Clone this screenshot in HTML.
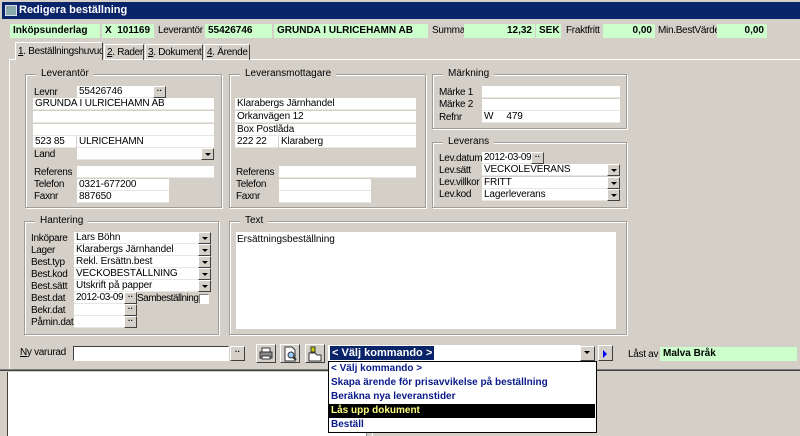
<!DOCTYPE html>
<html><head><meta charset="utf-8"><style>
*{box-sizing:border-box;margin:0;padding:0}
body{width:800px;height:436px;overflow:hidden;background:#d4d0c8;font-family:"Liberation Sans",sans-serif;font-size:10px;color:#000;position:relative}
.a{position:absolute;white-space:nowrap}
.i{position:absolute;background:#fff;height:12px;line-height:12px;padding-left:2px;overflow:hidden;white-space:nowrap;border-bottom:1px solid #e8e6e0;letter-spacing:-0.15px}
.g{position:absolute;background:#ccffcc;height:14px;line-height:14px;padding:0 3px;font-weight:bold;white-space:nowrap}
.l{position:absolute;line-height:12px;white-space:nowrap;letter-spacing:-0.3px}
.b{position:absolute;width:13px;height:12px;background:#d4d0c8;border:1px solid;border-color:#fff #404040 #404040 #fff;font-size:8px;line-height:8px;text-align:center;font-weight:bold}
.gb{position:absolute;border:1px solid #a09d96;box-shadow:1px 1px 0 #fff inset,1px 1px 0 #fff}
.lg{position:absolute;background:#d4d0c8;padding:0 5px;line-height:12px;top:-7px;left:10px;white-space:nowrap}
.dd:after{content:"";position:absolute;left:3px;top:4px;border:3px solid transparent;border-top:3px solid #000;border-bottom:0}
.tab{position:absolute;top:44px;height:16px;line-height:15px;padding:0 2px;border:1px solid;border-color:#fff #404040 transparent #fff;border-bottom:none;white-space:nowrap;overflow:hidden;letter-spacing:-0.3px}
.ib{position:absolute;top:344px;width:20px;height:19px;border:1px solid;border-color:#fff #404040 #404040 #fff;background:#d4d0c8}
.ol{position:absolute;left:329px;width:266px;height:14px;line-height:14px;padding-left:2px;font-weight:bold;color:#0a1a8a;font-size:10px}
</style></head><body>
<div class="a" style="left:2px;top:2px;width:798px;height:17px;background:#0a246a"></div>
<div class="a" style="left:5px;top:5px;width:12px;height:11px;background:#8aa;border:1px solid #dde"></div>
<div class="a" style="left:19px;top:3px;color:#fff;font-weight:bold;font-size:11px;line-height:15px">Redigera beställning</div>
<div class="g" style="left:10px;top:24px;width:90px">Inköpsunderlag</div>
<div class="g" style="left:102px;top:24px;width:52px">X &nbsp;101169</div>
<div class="l" style="left:158px;top:25px">Leverantör</div>
<div class="g" style="left:205px;top:24px;width:67px">55426746</div>
<div class="g" style="left:274px;top:24px;width:154px">GRUNDA I ULRICEHAMN AB</div>
<div class="l" style="left:432px;top:25px">Summa</div>
<div class="g" style="left:464px;top:24px;width:71px;text-align:right">12,32</div>
<div class="g" style="left:536px;top:24px;width:25px">SEK</div>
<div class="l" style="left:566px;top:25px">Fraktfritt</div>
<div class="g" style="left:603px;top:24px;width:52px;text-align:right">0,00</div>
<div class="l" style="left:658px;top:25px">Min.BestVärde</div>
<div class="g" style="left:717px;top:24px;width:50px;text-align:right">0,00</div>
<div class="a" style="left:10px;top:59px;width:790px;height:1px;background:#fff"></div>
<div class="a" style="left:9px;top:59px;width:1px;height:312px;background:#fff"></div>
<div class="a" style="left:0;top:369px;width:800px;height:1px;background:#808080"></div>
<div class="a" style="left:0;top:370px;width:800px;height:1px;background:#404040"></div>
<div class="tab" style="left:15px;top:42px;height:18px;width:88px;background:#d4d0c8;z-index:2;line-height:17px"><u>1</u>. Beställningshuvud</div>
<div class="tab" style="left:104px;width:40px"><u>2</u>. Rader</div>
<div class="tab" style="left:145px;width:58px"><u>3</u>. Dokument</div>
<div class="tab" style="left:204px;width:46px"><u>4</u>. Ärende</div>
<div class="gb" style="left:25px;top:74px;width:197px;height:134px"><span class="lg">Leverantör</span></div>
<div class="l" style="left:34px;top:87px">Levnr</div>
<div class="i" style="left:77px;top:86px;width:76px">55426746</div><div class="b" style="left:153px;top:86px">··</div>
<div class="i" style="left:33px;top:98px;width:181px">GRUNDA I ULRICEHAMN AB</div>
<div class="i" style="left:33px;top:111px;width:181px"></div>
<div class="i" style="left:33px;top:124px;width:181px"></div>
<div class="i" style="left:33px;top:136px;width:43px">523 85</div>
<div class="i" style="left:77px;top:136px;width:137px">ULRICEHAMN</div>
<div class="l" style="left:34px;top:149px">Land</div>
<div class="i" style="left:77px;top:148px;width:124px"></div><div class="b dd" style="left:201px;top:148px"></div>
<div class="l" style="left:34px;top:167px">Referens</div>
<div class="i" style="left:77px;top:166px;width:137px"></div>
<div class="l" style="left:34px;top:179px">Telefon</div>
<div class="i" style="left:77px;top:179px;width:92px">0321-677200</div>
<div class="l" style="left:34px;top:191px">Faxnr</div>
<div class="i" style="left:77px;top:191px;width:92px">887650</div>
<div class="gb" style="left:229px;top:74px;width:197px;height:134px"><span class="lg">Leveransmottagare</span></div>
<div class="i" style="left:235px;top:98px;width:181px">Klarabergs Järnhandel</div>
<div class="i" style="left:235px;top:111px;width:181px">Orkanvägen 12</div>
<div class="i" style="left:235px;top:124px;width:181px">Box Postlåda</div>
<div class="i" style="left:235px;top:136px;width:43px">222 22</div>
<div class="i" style="left:279px;top:136px;width:137px">Klaraberg</div>
<div class="l" style="left:236px;top:167px">Referens</div>
<div class="i" style="left:279px;top:166px;width:137px"></div>
<div class="l" style="left:236px;top:179px">Telefon</div>
<div class="i" style="left:279px;top:179px;width:92px"></div>
<div class="l" style="left:236px;top:191px">Faxnr</div>
<div class="i" style="left:279px;top:191px;width:92px"></div>
<div class="gb" style="left:432px;top:74px;width:195px;height:55px"><span class="lg">Märkning</span></div>
<div class="l" style="left:439px;top:87px">Märke 1</div><div class="i" style="left:482px;top:86px;width:138px"></div>
<div class="l" style="left:439px;top:99px">Märke 2</div><div class="i" style="left:482px;top:99px;width:138px"></div>
<div class="l" style="left:439px;top:112px">Refnr</div><div class="i" style="left:482px;top:111px;width:138px">W &nbsp;&nbsp;&nbsp;&nbsp;479</div>
<div class="gb" style="left:432px;top:142px;width:195px;height:66px"><span class="lg">Leverans</span></div>
<div class="l" style="left:439px;top:153px">Lev.datum</div><div class="i" style="left:482px;top:152px;width:49px;letter-spacing:-0.4px">2012-03-09</div><div class="b" style="left:531px;top:152px">··</div>
<div class="l" style="left:439px;top:165px">Lev.sätt</div><div class="i" style="left:482px;top:164px;width:125px">VECKOLEVERANS</div><div class="b dd" style="left:607px;top:164px"></div>
<div class="l" style="left:439px;top:177px">Lev.villkor</div><div class="i" style="left:482px;top:177px;width:125px">FRITT</div><div class="b dd" style="left:607px;top:177px"></div>
<div class="l" style="left:439px;top:189px">Lev.kod</div><div class="i" style="left:482px;top:189px;width:125px">Lagerleverans</div><div class="b dd" style="left:607px;top:189px"></div>
<div class="gb" style="left:24px;top:221px;width:195px;height:114px"><span class="lg">Hantering</span></div>
<div class="l" style="left:31px;top:233px">Inköpare</div><div class="i" style="left:74px;top:232px;width:124px">Lars Böhn</div><div class="b dd" style="left:198px;top:232px"></div>
<div class="l" style="left:31px;top:245px">Lager</div><div class="i" style="left:74px;top:244px;width:124px">Klarabergs Järnhandel</div><div class="b dd" style="left:198px;top:244px"></div>
<div class="l" style="left:31px;top:257px">Best.typ</div><div class="i" style="left:74px;top:256px;width:124px">Rekl. Ersättn.best</div><div class="b dd" style="left:198px;top:256px"></div>
<div class="l" style="left:31px;top:269px">Best.kod</div><div class="i" style="left:74px;top:268px;width:124px">VECKOBESTÄLLNING</div><div class="b dd" style="left:198px;top:268px"></div>
<div class="l" style="left:31px;top:281px">Best.sätt</div><div class="i" style="left:74px;top:280px;width:124px">Utskrift på papper</div><div class="b dd" style="left:198px;top:280px"></div>
<div class="l" style="left:31px;top:293px">Best.dat</div><div class="i" style="left:74px;top:292px;width:50px;letter-spacing:-0.4px">2012-03-09</div><div class="b" style="left:124px;top:292px">··</div>
<div class="l" style="left:137px;top:293px;letter-spacing:-0.5px">Sambeställning</div><div class="a" style="left:199px;top:294px;width:10px;height:10px;background:#fff;border:1px solid;border-color:#808080 #fff #fff #808080"></div>
<div class="l" style="left:31px;top:305px">Bekr.dat</div><div class="i" style="left:74px;top:304px;width:50px"></div><div class="b" style="left:124px;top:304px">··</div>
<div class="l" style="left:31px;top:317px">Påmin.dat</div><div class="i" style="left:74px;top:316px;width:50px"></div><div class="b" style="left:124px;top:316px">··</div>
<div class="gb" style="left:229px;top:221px;width:398px;height:114px"><span class="lg">Text</span></div>
<div class="a" style="left:236px;top:232px;width:380px;height:97px;background:#fff;padding:2px 1px">Ersättningsbeställning</div>
<div class="l" style="left:20px;top:347px"><u>N</u>y varurad</div>
<div class="a" style="left:73px;top:346px;width:156px;height:15px;background:#fff;border:1px solid;border-color:#404040 #fff #fff #404040"></div>
<div class="b" style="left:230px;top:346px;width:15px;height:15px;line-height:10px">··</div>
<div class="ib" style="left:256px"><svg width="18" height="17"><rect x="3" y="7" width="12" height="6" fill="#888" stroke="#333"/><rect x="5" y="3" width="8" height="4" fill="#fff" stroke="#333"/><rect x="5" y="11" width="8" height="3" fill="#fff" stroke="#333"/></svg></div>
<div class="ib" style="left:280px"><svg width="18" height="17"><path d="M4 2h7l3 3v11H4z" fill="#fff" stroke="#333"/><circle cx="10" cy="10" r="3" fill="#9cf" stroke="#333"/><path d="M12 12l3 3" stroke="#333" stroke-width="2"/></svg></div>
<div class="ib" style="left:305px"><svg width="18" height="17"><path d="M3 8h6l2 2h4v6H3z" fill="#fff" stroke="#333"/><rect x="5" y="2" width="4" height="5" fill="#cc0" stroke="#333"/></svg></div>
<div class="a" style="left:328px;top:345px;width:252px;height:16px;background:#fff"></div>
<div class="a" style="left:330px;top:346px;height:14px;line-height:14px;background:#0a246a;color:#fff;padding:0 2px;font-size:11px;font-weight:bold">&lt; Välj kommando &gt;</div>
<div class="b dd" style="left:580px;top:346px;width:15px;height:15px"></div>
<div class="a" style="left:598px;top:345px;width:15px;height:16px;border:1px solid;border-color:#fff #404040 #404040 #fff"><div class="a" style="left:4px;top:4px;border:4px solid transparent;border-left:4px solid #00f;border-right:0"></div></div>
<div class="l" style="left:628px;top:349px">Låst av</div>
<div class="g" style="left:660px;top:347px;width:137px">Malva Bråk</div>
<div class="a" style="left:7px;top:372px;width:359px;height:64px;background:#fff;border-left:1px solid #404040"></div>
<div class="a" style="left:366px;top:372px;width:1px;height:64px;background:#808080"></div>
<div class="a" style="left:372px;top:372px;width:1px;height:64px;background:#fff"></div>
<div class="a" style="left:328px;top:361px;width:269px;height:72px;background:#fff;border:1px solid #000"></div>
<div class="ol" style="top:362px">&lt; Välj kommando &gt;</div>
<div class="ol" style="top:376px">Skapa ärende för prisavvikelse på beställning</div>
<div class="ol" style="top:390px">Beräkna nya leveranstider</div>
<div class="ol" style="top:404px;background:#000;color:#ffff80">Lås upp dokument</div>
<div class="ol" style="top:418px">Beställ</div>
</body></html>
